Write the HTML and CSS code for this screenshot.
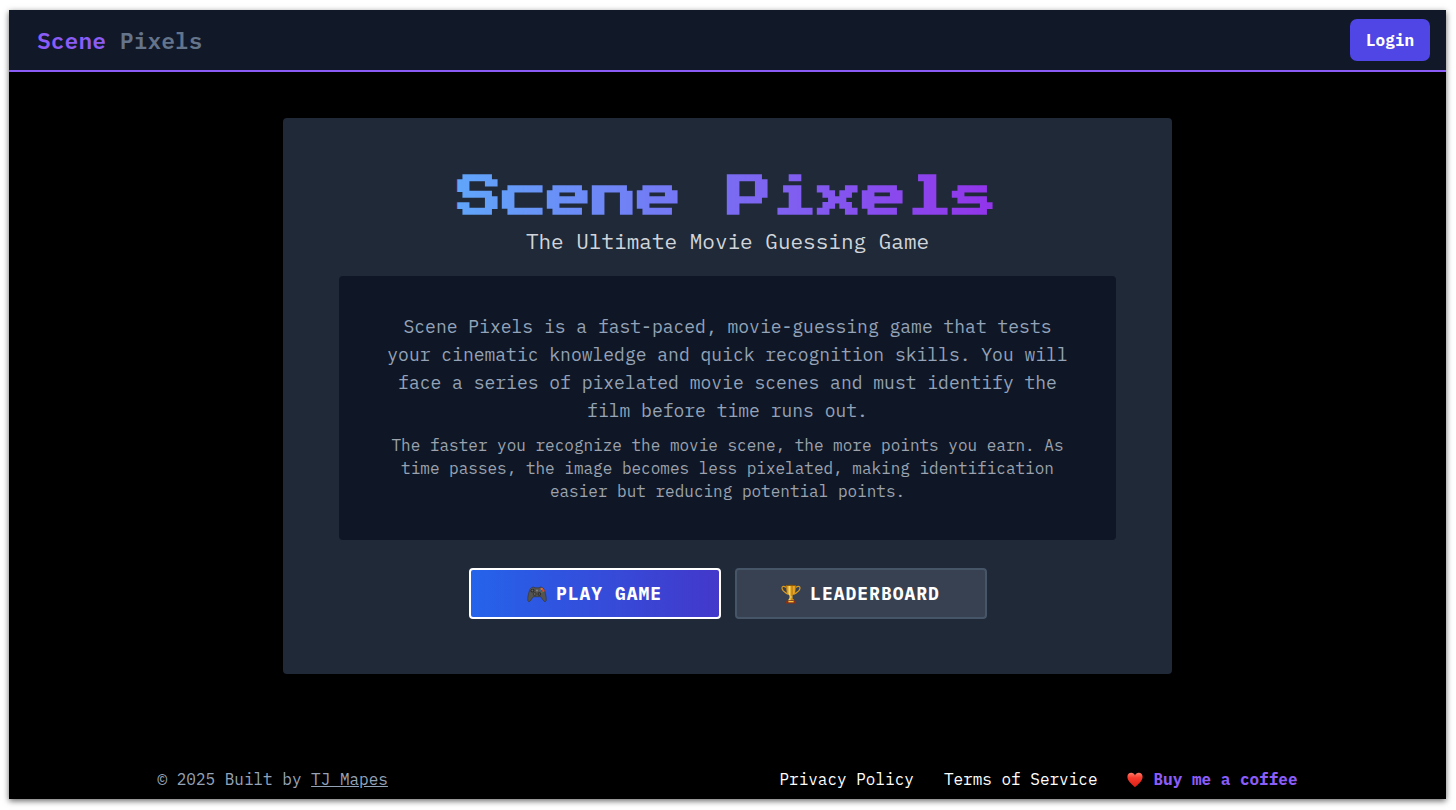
FILE: index.html
```
<!DOCTYPE html>
<html lang="en">
<head>
    <meta charset="UTF-8">
    <meta name="viewport" content="width=device-width, initial-scale=1.0">
    <title>Scene Pixels</title>
    <link rel="stylesheet" href="styles.css">
</head>
<body>
    <div class="app">
        <header class="header">
            <a href="#" class="logo"><span class="logo-accent">Scene</span> Pixels</a>
            <button class="login-button">Login</button>
        </header>

        <main class="main">
            <section class="card">
                <h1 class="title">Scene Pixels</h1>
                <p class="subtitle">The Ultimate Movie Guessing Game</p>

                <div class="intro">
                    <p class="intro-lead">Scene Pixels is a fast-paced, movie-guessing game that tests your cinematic knowledge and quick recognition skills. You will face a series of pixelated movie scenes and must identify the film before time runs out.</p>
                    <p class="intro-note">The faster you recognize the movie scene, the more points you earn. As time passes, the image becomes less pixelated, making identification easier but reducing potential points.</p>
                </div>

                <div class="actions">
                    <button class="action action-play">
                        <svg class="icon" viewBox="0 0 20 20" aria-hidden="true">
                            <path d="M5 3.4Q7 2.4 8 3.8H12Q13 2.4 15 3.4Q17.4 4.4 18.2 8.6Q19.6 14 19.2 16.6Q18.7 18.2 17 17.2L13.7 12.7H6.3L3 17.2Q1.3 18.2.8 16.6Q.4 14 1.8 8.6Q2.6 4.4 5 3.4Z" fill="#55534f" stroke="#33322f" stroke-width=".6"/>
                            <path d="M3.2 6.2Q4.4 4 6.2 4.4M16.8 6.2Q15.6 4 13.8 4.4" fill="none" stroke="#777" stroke-width=".7"/>
                            <circle cx="5.4" cy="6.6" r="2" fill="#2b2b2b"/>
                            <circle cx="5.4" cy="6.6" r="1" fill="#656565"/>
                            <circle cx="7.7" cy="10" r="1.8" fill="#2b2b2b"/>
                            <circle cx="12.3" cy="10" r="1.8" fill="#2b2b2b"/>
                            <circle cx="12.3" cy="10" r=".8" fill="#656565"/>
                            <path d="M7.7 8.8V11.2M6.5 10H8.9" stroke="#777" stroke-width=".7"/>
                            <circle cx="10" cy="6.5" r=".9" fill="#8a8a8a"/>
                            <circle cx="14.7" cy="4.9" r="1.2" fill="#e9672c"/>
                            <circle cx="16.4" cy="6.7" r="1.2" fill="#e5452a"/>
                            <circle cx="13.1" cy="6.7" r=".9" fill="#3b6a9f"/>
                            <circle cx="14.8" cy="8.3" r=".9" fill="#467a4b"/>
                        </svg>
                        PLAY GAME
                    </button>
                    <button class="action action-board">
                        <svg class="icon" viewBox="0 0 20 20" aria-hidden="true">
                            <defs>
                                <linearGradient id="gold">
                                    <stop offset="0" stop-color="#a86b0b"/>
                                    <stop offset=".35" stop-color="#ffd95a"/>
                                    <stop offset=".6" stop-color="#c17a0a"/>
                                    <stop offset=".8" stop-color="#f2b52c"/>
                                    <stop offset="1" stop-color="#9a5d08"/>
                                </linearGradient>
                            </defs>
                            <path d="M5.4 3.4C2 1.4.6 2.6 1.1 4.9C1.7 8 4.6 8.4 7 10.2M14.6 3.4C18 1.4 19.4 2.6 18.9 4.9C18.3 8 15.4 8.4 13 10.2" fill="none" stroke="#d99a20" stroke-width="1.2"/>
                            <path d="M5 1.2H15Q15.4 9.4 11.6 11.6L11 13L11.7 14.6L13.4 16.6H6.6L8.3 14.6L9 13L8.4 11.6Q4.6 9.4 5 1.2Z" fill="url(#gold)"/>
                            <ellipse cx="10" cy="1.4" rx="5" ry=".7" fill="#8f5807"/>
                            <path d="M8.2 13H11.8" stroke="#ffd95a" stroke-width=".8"/>
                            <path d="M5.6 16.4H14.4L15.2 19.4H4.8Z" fill="#8c2f12"/>
                            <path d="M7.4 17H12.6V18.3H7.4Z" fill="#f5c33e"/>
                        </svg>
                        LEADERBOARD
                    </button>
                </div>
            </section>
        </main>

        <footer class="footer">
            <p class="copyright">© 2025 Built by <a href="#">TJ Mapes</a></p>
            <nav class="footer-links">
                <a href="#">Privacy Policy</a>
                <a href="#">Terms of Service</a>
                <a href="#" class="coffee">
                    <svg class="heart" viewBox="0 0 16 16" aria-hidden="true">
                        <defs>
                            <linearGradient id="red" x2="0" y2="1">
                                <stop offset="0" stop-color="#ff7a68"/>
                                <stop offset=".35" stop-color="#f73a2c"/>
                                <stop offset="1" stop-color="#d91f16"/>
                            </linearGradient>
                        </defs>
                        <path d="M8 15.2C5.6 12.4.4 9.4.4 4.9C.4 2.3 2.2.8 4.2.8C6 .8 7.4 1.8 8 3.4C8.6 1.8 10 .8 11.8.8C13.8.8 15.6 2.3 15.6 4.9C15.6 9.4 10.4 12.4 8 15.2Z" fill="url(#red)"/>
                    </svg>
                    Buy me a coffee
                </a>
            </nav>
        </footer>
    </div>
</body>
</html>
```
FILE: styles.css
```
* {
    margin: 0;
    padding: 0;
    box-sizing: border-box;
}

body {
    font-family: 'IBM Plex Mono', 'Liberation Mono', monospace;
    font-size: 16px;
    line-height: 23px;
    background: #fff;
    min-height: 100vh;
    padding: 10px 10px 11px 9px;
    display: flex;
}

a {
    color: inherit;
    text-decoration: none;
}

button {
    font-family: inherit;
    font-weight: 700;
    color: #fff;
    cursor: pointer;
}

.app {
    flex: 1;
    display: flex;
    flex-direction: column;
    background: #000;
    box-shadow: 0 2px 6px rgba(0, 0, 0, 0.6);
}

.header {
    display: flex;
    align-items: center;
    justify-content: space-between;
    padding: 9px 16px 9px 28px;
    background: #111827;
    border-bottom: 2px solid #8b5cf6;
}

.logo {
    font-size: 23px;
    font-weight: 600;
    color: #64748b;
}

.logo-accent {
    color: #8b5cf6;
}

.login-button {
    height: 42px;
    padding: 0 16px;
    font-size: 16px;
    background: #4f46e5;
    border: none;
    border-radius: 7px;
}

.main {
    flex: 1;
    padding: 46px 16px;
}

.card {
    max-width: 889px;
    margin: 0 auto;
    padding: 52px 56px 55px;
    background: #1f2937;
    border-radius: 4px;
    text-align: center;
}

.title {
    margin-bottom: 2px;
    font-family: 'Press Start 2P', 'IBM Plex Mono', 'Liberation Mono', monospace;
    font-size: 45px;
    font-weight: 700;
    line-height: 55px;
    background: linear-gradient(to right, #60a5fa, #9333ea) center / 540px 100px;
    -webkit-background-clip: text;
    background-clip: text;
    color: transparent;
}

.subtitle {
    font-size: 21px;
    line-height: 28px;
    color: #d1d5db;
}

.intro {
    margin-top: 21px;
    padding: 37px 38px;
    background: #0f1726;
    border-radius: 4px;
}

.intro-lead {
    margin-bottom: 9px;
    font-size: 18px;
    line-height: 28px;
    color: #94a3b8;
}

.intro-note {
    color: #9ca3af;
}

.actions {
    margin-top: 28px;
    display: flex;
    flex-wrap: wrap;
    justify-content: center;
    gap: 14px;
}

.action {
    width: 252px;
    height: 51px;
    display: flex;
    align-items: center;
    justify-content: center;
    gap: 9px;
    font-size: 18px;
    letter-spacing: 1px;
    border-radius: 4px;
}

.action-play {
    background: linear-gradient(to right, #2563eb, #4338ca);
    border: 2px solid #fff;
}

.action-board {
    background: #374151;
    border: 2px solid #475569;
}

.icon {
    width: 20px;
    height: 20px;
}

.footer {
    width: 100%;
    max-width: 1140px;
    margin: 0 auto;
    padding-bottom: 8px;
    display: flex;
    flex-wrap: wrap;
    justify-content: space-between;
    gap: 8px 30px;
}

.copyright {
    color: #94a3b8;
}

.copyright a {
    text-decoration: underline;
}

.footer-links {
    display: flex;
    flex-wrap: wrap;
    gap: 8px 30px;
    color: #fff;
}

.coffee {
    display: flex;
    align-items: center;
    gap: 10px;
    font-weight: 700;
    color: #8b5cf6;
}

.heart {
    width: 16px;
    height: 16px;
}
```
